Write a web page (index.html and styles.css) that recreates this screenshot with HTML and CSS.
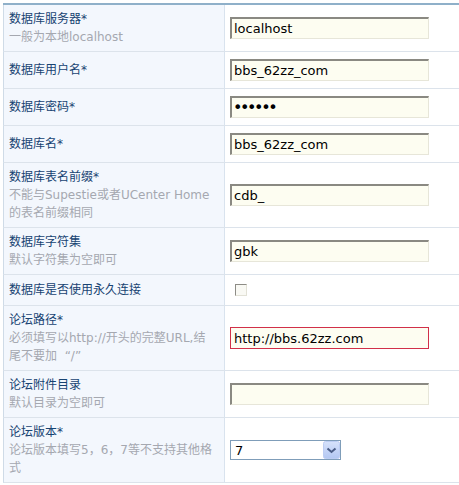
FILE: index.html
```html
<!DOCTYPE html>
<html lang="zh-CN">
<head>
<meta charset="utf-8">
<title>安装设置</title>
<link rel="stylesheet" href="styles.css">
</head>
<body>
<div class="wrap">
<table class="form">
  <tr>
    <td class="lbl"><div class="name">数据库服务器*</div><div class="hint">一般为本地localhost</div></td>
    <td class="fld"><div class="ctl"><input class="txt" type="text" value="localhost"></div></td>
  </tr>
  <tr>
    <td class="lbl"><div class="name">数据库用户名*</div></td>
    <td class="fld"><div class="ctl"><input class="txt" type="text" value="bbs_62zz_com"></div></td>
  </tr>
  <tr>
    <td class="lbl"><div class="name">数据库密码*</div></td>
    <td class="fld"><div class="ctl"><input class="txt pwd" type="password" value="123456"></div></td>
  </tr>
  <tr>
    <td class="lbl"><div class="name">数据库名*</div></td>
    <td class="fld"><div class="ctl"><input class="txt" type="text" value="bbs_62zz_com"></div></td>
  </tr>
  <tr>
    <td class="lbl"><div class="name">数据库表名前缀*</div><div class="hint">不能与Supestie或者UCenter Home<br>的表名前缀相同</div></td>
    <td class="fld"><div class="ctl"><input class="txt" type="text" value="cdb_"></div></td>
  </tr>
  <tr>
    <td class="lbl"><div class="name">数据库字符集</div><div class="hint">默认字符集为空即可</div></td>
    <td class="fld"><div class="ctl"><input class="txt" type="text" value="gbk"></div></td>
  </tr>
  <tr>
    <td class="lbl"><div class="name">数据库是否使用永久连接</div></td>
    <td class="fld"><div class="ctl"><input class="chk" type="checkbox"></div></td>
  </tr>
  <tr>
    <td class="lbl"><div class="name">论坛路径*</div><div class="hint">必须填写以http://开头的完整URL,结<br>尾不要加 &nbsp;“/”</div></td>
    <td class="fld"><div class="ctl"><input class="txt focus" type="text" value="http://bbs.62zz.com"></div></td>
  </tr>
  <tr>
    <td class="lbl"><div class="name">论坛附件目录</div><div class="hint">默认目录为空即可</div></td>
    <td class="fld"><div class="ctl"><input class="txt" type="text" value=""></div></td>
  </tr>
  <tr>
    <td class="lbl"><div class="name">论坛版本*</div><div class="hint">论坛版本填写5，6，7等不支持其他格<br>式</div></td>
    <td class="fld"><div class="ctl">
      <span class="sel">
        <select><option>7</option><option>6</option><option>5</option></select>
        <svg class="sel-btn" width="17" height="18" viewBox="0 0 17 18">
          <defs>
            <linearGradient id="g" x1="0" y1="0" x2="0" y2="1">
              <stop offset="0" stop-color="#d6e2fb"/>
              <stop offset="1" stop-color="#b3c7f2"/>
            </linearGradient>
          </defs>
          <rect x="0.5" y="0.5" width="16" height="17" rx="2" fill="url(#g)" stroke="#bccdf3"/>
          <path d="M4.5 7.5 L8.5 11 L12.5 7.5" fill="none" stroke="#4a5d86" stroke-width="2"/>
        </svg>
      </span>
    </div></td>
  </tr>
</table>
</div>
</body>
</html>
```
FILE: styles.css
```css
html, body {
  margin: 0;
  padding: 0;
  background: #ffffff;
  overflow: hidden;
}

.wrap {
  padding: 3px 0 0 3px;
}

.form {
  width: 456px;
  table-layout: fixed;
  border-collapse: separate;
  border-spacing: 0;
  border-top: 2px solid #8fb0c9;
  font-family: "DejaVu Sans", "Noto Sans CJK SC", sans-serif;
  font-size: 12px;
  line-height: 18px;
}

.lbl {
  box-sizing: border-box;
  width: 222px;
  padding: 5px 5px 5px 5px;
  background: #f3f7fd;
  border-left: 1px solid #cfdbe7;
  border-right: 1px solid #d9e3ee;
  border-bottom: 1px solid #dce3eb;
  vertical-align: middle;
}

.fld {
  padding: 5px;
  background: #ffffff;
  border-bottom: 1px solid #dce3eb;
  vertical-align: middle;
}

.name {
  color: #174372;
  white-space: nowrap;
}

.hint {
  color: #a5a8b0;
  white-space: nowrap;
}

.ctl {
  display: flex;
  align-items: center;
}

.txt {
  box-sizing: border-box;
  width: 199px;
  height: 22px;
  margin: 2px 0;
  padding: 0 2px;
  border-style: solid;
  border-width: 2px 1px 1px 2px;
  border-color: #8a8982 #e7e6d9 #e7e6d9 #8a8982;
  background: #fdfdf1;
  color: #000000;
  font-family: "DejaVu Sans", sans-serif;
  font-size: 13px;
  outline: none;
}

.pwd {
  font-size: 16px;
  letter-spacing: -2.4px;
  padding-left: 1px;
}

.txt.focus {
  border: 1px solid #d13049;
  padding: 0 3px;
}

.chk {
  appearance: none;
  -webkit-appearance: none;
  box-sizing: border-box;
  width: 12px;
  height: 12px;
  margin: 4px 0 4px 5px;
  border-style: solid;
  border-width: 1px;
  border-color: #8d8c86 #e2e1d6 #e2e1d6 #8d8c86;
  background: #f9f9f4;
}

.sel {
  position: relative;
  display: block;
  width: 111px;
  height: 20px;
  margin: 3px 0;
}

.sel select {
  appearance: none;
  -webkit-appearance: none;
  box-sizing: border-box;
  width: 111px;
  height: 20px;
  margin: 0;
  padding: 0 0 0 4px;
  border: 1px solid #7f9db9;
  border-radius: 0;
  background: #ffffff;
  color: #000000;
  font-family: "DejaVu Sans", sans-serif;
  font-size: 13px;
  outline: none;
}

.sel-btn {
  position: absolute;
  right: 1px;
  top: 1px;
  width: 17px;
  height: 18px;
}
```
